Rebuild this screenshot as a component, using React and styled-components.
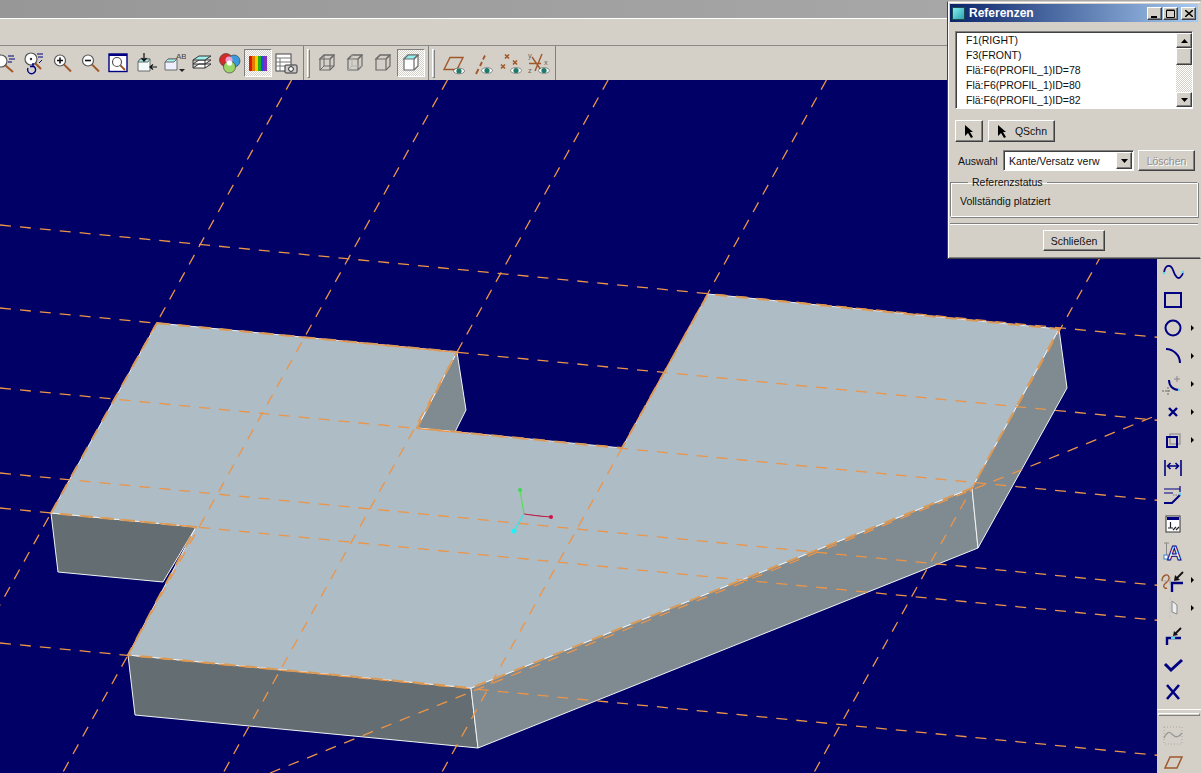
import React from 'react'
import styled, { createGlobalStyle, css } from 'styled-components'

const GlobalStyle = createGlobalStyle`
  html, body {
    margin: 0;
    width: 1201px;
    height: 773px;
    overflow: hidden;
    background: #d4d0c8;
    font-family: "Liberation Sans", Arial, sans-serif;
  }
`

const raised = css`
  background: #d4d0c8;
  border: 1px solid;
  border-color: #fff #404040 #404040 #fff;
  box-shadow: inset -1px -1px 0 #808080;
`

const sunken = css`
  border: 1px solid;
  border-color: #808080 #fff #fff #808080;
  box-shadow: inset 1px 1px 0 #404040;
`

const Shell = styled.div`
  position: relative;
  width: 1201px;
  height: 773px;
  display: flex;
  flex-direction: column;
  overflow: hidden;
`

const AppTitle = styled.div`
  height: 18px;
  background: linear-gradient(90deg, #979797, #ababab);
`

const MenuBand = styled.div`
  height: 26px;
  background: #d4d0c8;
  border-top: 1px solid #fff;
`

const ToolBar = styled.div`
  height: 34px;
  display: flex;
  background: #d4d0c8;
  border-top: 1px solid #8a8a86;
`

const ToolGroup = styled.div`
  display: flex;
  align-items: center;
  height: 34px;
  padding-right: ${p => p.$pad || 0}px;
  margin-left: ${p => p.$shift || 0}px;
  border-right: 1px solid #808080;
`

const Grip = styled.div`
  width: 1px;
  height: 27px;
  margin: 0 ${p => p.$after}px 0 3px;
  border: 1px solid;
  border-color: #fff #808080 #808080 #fff;
`

const ToolButton = styled.div`
  width: 28px;
  height: 28px;
  flex: none;
  display: flex;
  align-items: center;
  justify-content: center;
  box-sizing: border-box;
  ${p => p.$pressed && css`
    border: 1px solid;
    border-color: #808080 #fff #fff #808080;
    background: repeating-conic-gradient(#fff 0 25%, #d4d0c8 0 50%) 0 0 / 2px 2px;
  `}
`

const Main = styled.div`
  flex: 1;
  display: flex;
  min-height: 0;
`

const Scene = styled.svg`
  display: block;
  width: 1157px;
  height: 693px;
  flex: none;
  background: #000066;
`

const SideBar = styled.div`
  flex: 1;
  display: flex;
  flex-direction: column;
  padding-top: 178px;
  overflow: hidden;
  background: #d4d0c8;
`

const SideButton = styled.div`
  height: ${p => p.$height}px;
  flex: none;
  display: flex;
  align-items: center;
  padding-left: 4px;
`

const FlyoutMark = styled.span`
  width: 0;
  height: 0;
  margin-left: 6px;
  border-left: 3px solid #000;
  border-top: 3px solid transparent;
  border-bottom: 3px solid transparent;
`

const SideDivider = styled.div`
  flex: none;
  height: 13px;
  margin-top: 3px;
  border-top: 1px solid #fff;
  box-sizing: border-box;
  &::after {
    content: '';
    display: block;
    height: 1px;
    margin: 3px 1px 0;
    border: 1px solid;
    border-color: #fff #808080 #808080 #fff;
  }
`

const Dialog = styled.div`
  position: absolute;
  left: 947px;
  top: 1px;
  width: 254px;
  height: 258px;
  box-sizing: border-box;
  padding: 2px;
  background: #d4d0c8;
  border: 1px solid;
  border-color: #d4d0c8 #d4d0c8 #404040 #404040;
  box-shadow: inset 1px 1px 0 #fff, inset 0 -1px 0 #808080;
  font-size: 10.5px;
  color: #111;
`

const DialogTitle = styled.div`
  height: 18px;
  display: flex;
  align-items: center;
  padding: 0 2px;
  background: linear-gradient(90deg, #0a246a, #a6caf0);
  color: #fff;
  font-weight: bold;
  font-size: 12px;
`

const TitleIcon = styled.span`
  width: 11px;
  height: 11px;
  margin-right: 4px;
  background: linear-gradient(135deg, #7ff0ee, #30a0b0);
  border: 1px solid #1c4a50;
`

const CaptionButtons = styled.div`
  margin-left: auto;
  display: flex;
`

const CaptionButton = styled.span`
  ${raised}
  box-sizing: border-box;
  width: 15px;
  height: 13px;
  margin-left: ${p => p.$gap}px;
  display: flex;
  align-items: center;
  justify-content: center;
`

const RefList = styled.div`
  ${sunken}
  display: flex;
  width: 236px;
  height: 76px;
  margin: 9px 0 0 5px;
  background: #fff;
`

const RefRows = styled.ul`
  flex: 1;
  list-style: none;
  margin: 0;
  padding: 1px 0 0 10px;
`

const RefRow = styled.li`
  height: 15px;
  line-height: 15px;
`

const ScrollTrack = styled.div`
  width: 16px;
  display: flex;
  flex-direction: column;
  margin: 1px 0;
  background: repeating-conic-gradient(#fff 0 25%, #d4d0c8 0 50%) 0 0 / 2px 2px;
`

const ScrollButton = styled.div`
  ${raised}
  box-sizing: border-box;
  height: ${p => p.$tall || 15}px;
  flex: none;
  margin-top: ${p => (p.$end ? 'auto' : 0)};
  display: flex;
  align-items: center;
  justify-content: center;
`

const ActionRow = styled.div`
  display: flex;
  gap: 5px;
  margin: 11px 0 0 5px;
`

const Button = styled.div`
  ${raised}
  box-sizing: border-box;
  width: ${p => p.$width}px;
  height: ${p => p.$height || 21}px;
  display: flex;
  gap: 7px;
  align-items: center;
  justify-content: center;
  color: ${p => (p.$disabled ? '#8f8f8f' : '#111')};
  ${p => p.$disabled && 'text-shadow: 1px 1px 0 #fff;'}
`

const ChoiceRow = styled.div`
  display: flex;
  align-items: center;
  margin: 8px 0 0 8px;
`

const ChoiceLabel = styled.span`
  width: 45px;
`

const Choice = styled.div`
  ${sunken}
  box-sizing: border-box;
  width: 131px;
  height: 21px;
  margin-right: 4px;
  padding-left: 5px;
  display: flex;
  align-items: center;
  background: #fff;
`

const ChoiceArrow = styled(ScrollButton)`
  width: 16px;
  height: 17px;
  margin-left: auto;
  margin-right: 1px;
  margin-top: 0;
`

const StatusBox = styled.fieldset`
  box-sizing: border-box;
  height: 40px;
  width: 248px;
  margin: 6px 0 0;
  padding: 0 0 0 9px;
  border: 1px solid;
  border-color: #808080 #fff #fff #808080;
  box-shadow: 1px 1px 0 #808080, inset 1px 1px 0 #fff;
  line-height: 14px;
`

const StatusLegend = styled.legend`
  margin-left: 8px;
  padding: 0 4px;
  line-height: 10px;
`

const StatusText = styled.div`
  margin-top: 7px;
`

const Rule = styled.div`
  height: 0;
  margin: 6px 0 0;
  border-top: 1px solid #808080;
  border-bottom: 1px solid #fff;
`

const FooterRow = styled.div`
  display: flex;
  justify-content: center;
  margin-top: 5px;
`

const Icon = ({ children, size = 24 }) => (
  <svg width={size} height={size} viewBox="0 0 24 24" fill="none">
    {children}
  </svg>
)

const NAVY = '#000080'
const BROWN = '#a0582a'
const GREY = '#6b6b6b'

const Lens = ({ cx = 10, cy = 9.500, r = 5.500, hx = 21, hy = 20.500 }) => (
  <>
    <line x1={cx + r * 0.7} y1={cy + r * 0.7} x2={hx} y2={hy} stroke={BROWN} strokeWidth="2" />
    <circle cx={cx} cy={cy} r={r} fill="#fff" stroke="#555" strokeWidth="1.200" />
  </>
)

const Eye = ({ x = 16, y = 20 }) => (
  <>
    <ellipse cx={x} cy={y} rx="5.500" ry="2.800" fill="#fff" stroke="#333" strokeWidth=".5" />
    <circle cx={x} cy={y} r="2.600" fill="#1c7a68" />
  </>
)

const Cube = ({ fill = 'none', top = 'none', x = 5, y = 8, dash }) => (
  <>
    <path d={`M${x} ${y}l4 -4h10v11l-4 4h-10z`} fill={fill} stroke={GREY} strokeWidth="1.200" />
    <path d={`M${x} ${y}l4 -4h10l-4 4z`} fill={top} stroke={GREY} strokeWidth="1.200" />
    <path d={`M${x + 10} ${y}v11M${x + 10} ${y}l4 -4`} stroke={GREY} strokeWidth="1.200" />
    {dash && <path d={`M${x + 4} ${y - 4}v11h10M${x + 4} ${y + 7}l-4 4`} stroke={dash} strokeWidth="1" />}
  </>
)

const topIcons = [
  <Icon key="spec">
    <Lens cx={7} cy={10} r={6} hx={19} hy={21} />
    <path d="M14 5h6M15 8h6M14 11h4" stroke={NAVY} strokeWidth="1" />
  </Icon>,
  <Icon key="repaint">
    <Lens cx={9} cy={8} r={6} hx={19} hy={18} />
    <circle cx="9" cy="8" r="1.200" fill="#333" />
    <path d="M15 3h6M16 6h5M20 9l-3 3" stroke={NAVY} strokeWidth="1" />
    <path d="M6 17a4 4 0 1 0 5 -2M11 12v3.500h-3" stroke={NAVY} strokeWidth="1.400" />
  </Icon>,
  <Icon key="in">
    <Lens />
    <path d="M7 9.500h6M10 6.500v6" stroke="#111" strokeWidth="1.600" />
  </Icon>,
  <Icon key="out">
    <Lens />
    <path d="M7 9.500h6" stroke="#111" strokeWidth="1.600" />
  </Icon>,
  <Icon key="fit">
    <rect x="3" y="3" width="18" height="17.500" fill="#fff" stroke={NAVY} strokeWidth="1.400" />
    <rect x="3" y="3" width="18" height="2" fill={NAVY} />
    <Lens cx={11} cy={11} r={4.500} hx={19} hy={19} />
  </Icon>,
  <Icon key="orient">
    <path d="M4 11l2 -3h10v12H4z" fill="#f4fbfb" stroke={GREY} />
    <path d="M4 11l2 -3h10l-2 3z" fill="#9ff0ee" stroke={GREY} />
    <path d="M10 2v7M7.500 7l2.500 3 2.500 -3M23 16h-7M19 13.500l-3 2.500 3 2.500" stroke="#111" strokeWidth="1.200" />
  </Icon>,
  <Icon key="views">
    <path d="M3 11l3 -3h9v11H3z" fill="#eef" stroke={GREY} />
    <path d="M3 11l3 -3h9l-3 3z" fill="#9ff0ee" stroke={GREY} />
    <text x="14" y="8" fontSize="8" fill="#444" fontFamily="Liberation Sans">AB</text>
    <path d="M17 18h6l-3 3z" fill="#222" />
  </Icon>,
  <Icon key="layers">
    <path d="M3 17l6 -4h12l-6 4zM3 13l6 -4h12l-6 4z" fill="#fff" stroke="#333" />
    <path d="M3 9l6 -4h12l-6 4z" fill="#9ff0ee" stroke="#333" />
    <path d="M3 9v8M15 9v8" stroke="#333" />
  </Icon>,
  <Icon key="colors">
    <circle cx="8" cy="9" r="6.500" fill="#d42a2a" stroke="#333" strokeWidth=".6" />
    <circle cx="16" cy="10" r="6" fill="#3a9bdc" stroke="#333" strokeWidth=".6" />
    <circle cx="11.500" cy="16" r="6" fill="#9ad668" stroke="#333" strokeWidth=".6" />
    <circle cx="11" cy="9" r="3.500" fill="#f0a0d0" />
    <circle cx="11.500" cy="12" r="2.600" fill="#fff" />
  </Icon>,
  <Icon key="spectrum">
    <rect x="3" y="5" width="3" height="15" fill="#d81c00" />
    <rect x="6" y="5" width="3" height="15" fill="#e87a00" />
    <rect x="9" y="5" width="3" height="15" fill="#f4d000" />
    <rect x="12" y="5" width="3" height="15" fill="#22b020" />
    <rect x="15" y="5" width="3" height="15" fill="#2050e0" />
    <rect x="18" y="5" width="3" height="15" fill="#8030c0" />
  </Icon>,
  <Icon key="saved">
    <rect x="2" y="3" width="15" height="17" fill="#fff" stroke="#444" />
    <path d="M2 7h15M2 11h15M2 15h15M6 7v13" stroke="#777" />
    <rect x="11" y="14" width="12" height="8" rx="1" fill="#ccc" stroke="#333" />
    <circle cx="17" cy="18" r="2.400" fill="#fff" stroke="#222" />
  </Icon>,
]

const displayIcons = [
  <Icon key="wire"><Cube dash={GREY} /></Icon>,
  <Icon key="hidden"><Cube dash="#b0b0ac" /></Icon>,
  <Icon key="nohidden"><Cube /></Icon>,
  <Icon key="shaded"><Cube fill="#fff" top="#8ff0f0" /></Icon>,
]

const datumIcons = [
  <Icon key="planes">
    <path d="M1 18.500l6 -12h13l-6 12z" stroke={BROWN} strokeWidth="1.400" />
    <Eye />
  </Icon>,
  <Icon key="axes">
    <path d="M14 4.500l-2 4M11 11l-2 4M7.500 18l-2.500 5" stroke={BROWN} strokeWidth="1.800" />
    <Eye x={16} y={19.500} />
  </Icon>,
  <Icon key="points">
    <path d="M6 3.500l4 4M10 3.500l-4 4M14 9.500l4 4M18 9.500l-4 4M2 13.500l4 4M6 13.500l-4 4" stroke={BROWN} strokeWidth="1.600" />
    <Eye x={17} y={19.500} />
  </Icon>,
  <Icon key="csys">
    <path d="M15 3l-7 17M2 12.500h12M5 6l9 13" stroke={BROWN} strokeWidth="1.400" />
    <text x="1" y="7" fontSize="7.500" fill="#666" fontFamily="Liberation Sans">y</text>
    <text x="1" y="22" fontSize="7.500" fill="#666" fontFamily="Liberation Sans">z</text>
    <text x="17" y="14" fontSize="7.500" fill="#666" fontFamily="Liberation Sans">x</text>
    <Eye x={17} y={19.500} />
  </Icon>,
]

const CYAN = '#59d7f0'

const sideIcons = [
  { key: 'spline', icon: <><path d="M3 13c1 -9 7 -9 9 -3s5 10 7.500 7 2.500 -3 2.500 -5" stroke={NAVY} strokeWidth="1.800" /><circle cx="3" cy="13" r="1.300" fill={CYAN} /><circle cx="22" cy="12" r="1.300" fill={CYAN} /></> },
  { key: 'rect', icon: <rect x="4" y="5" width="16" height="14" stroke={NAVY} strokeWidth="2" /> },
  { key: 'circle', more: true, icon: <circle cx="12" cy="12" r="7.500" stroke={NAVY} strokeWidth="2" /> },
  { key: 'arc', more: true, icon: <path d="M5 5c7 0 14 6 14 14" stroke={NAVY} strokeWidth="2" /> },
  {
    key: 'fillet',
    more: true,
    icon: (
      <>
        <path d="M1 19h9M7 15v9" stroke="#888" strokeWidth="1.400" strokeDasharray="2 1" />
        <path d="M16 4v6M13 7h6" stroke="#888" />
        <path d="M8 8c0 6 4 10 10 10" stroke={NAVY} strokeWidth="2" />
        <circle cx="18" cy="18" r="1.300" fill={CYAN} />
      </>
    ),
  },
  { key: 'point', more: true, icon: <path d="M8 8l8 8M16 8l-8 8" stroke={NAVY} strokeWidth="2.400" /> },
  {
    key: 'offset',
    more: true,
    icon: (
      <>
        <rect x="9" y="6" width="10" height="10" stroke="#999" strokeWidth="1.400" />
        <rect x="6" y="9" width="10" height="10" stroke={NAVY} strokeWidth="2" />
      </>
    ),
  },
  { key: 'dim', icon: <path d="M4 4v16M20 4v16M7 10h10M9.500 7L6.500 10l3 3M14.500 7l3 3 -3 3" stroke={NAVY} strokeWidth="1.600" /> },
  {
    key: 'refdim',
    icon: (
      <>
        <path d="M3 5h16M19 2v6M3 9h9" stroke={NAVY} strokeWidth="1.200" />
        <path d="M12 11h6" stroke="#999" strokeDasharray="1.500 1" strokeWidth="1.400" />
        <path d="M3 19h8l8 -8" stroke={NAVY} strokeWidth="2" />
        <circle cx="19" cy="10" r="1.300" fill={CYAN} />
      </>
    ),
  },
  {
    key: 'note',
    icon: (
      <>
        <rect x="5" y="4" width="14" height="16" fill="#fff" stroke="#333" />
        <rect x="6" y="5" width="12" height="3" fill={NAVY} />
        <path d="M7 16h5M9.500 10v6M12 18l3 -3M15 18l3 -3" stroke="#222" strokeWidth="1.200" />
      </>
    ),
  },
  {
    key: 'text',
    icon: (
      <>
        <path d="M3 3h5M5.500 3v13" stroke="#888" />
        <rect x="3" y="15" width="4" height="4" fill="#fff" stroke="#3a7fd0" />
        <text x="6" y="20" fontSize="20" fontWeight="bold" fill="#fff" stroke={NAVY} strokeWidth="1" fontFamily="Liberation Sans">A</text>
      </>
    ),
  },
  {
    key: 'constraint',
    more: true,
    icon: (
      <>
        <path d="M1 13c0 -6 6 -8 7 -4s-4 6 -5 8 1 4 3 3" stroke={BROWN} strokeWidth="1.400" />
        <path d="M11 24v-9h11" stroke={NAVY} strokeWidth="2.400" />
        <path d="M1 13h9M9 9v8" stroke="#999" strokeDasharray="1.500 1" />
        <path d="M22 4l-7 7" stroke="#111" strokeWidth="1.800" />
        <path d="M13 13l1 -6 5 5z" fill="#111" />
      </>
    ),
  },
  {
    key: 'palette',
    more: true,
    icon: (
      <>
        <path d="M9 1v22" stroke="#c8c8c8" strokeWidth="1.500" strokeDasharray="3 1.500" />
        <path d="M11 5l5 4v9l-5 -2z" fill="#eee" stroke="#888" />
      </>
    ),
  },
  {
    key: 'modify',
    icon: (
      <>
        <path d="M6 21v-7h14" stroke={NAVY} strokeWidth="2.400" />
        <path d="M10 14h4" stroke={CYAN} strokeWidth="2.400" />
        <path d="M20 4l-6 6" stroke="#111" strokeWidth="1.800" />
        <path d="M12 12l1 -5 4 4z" fill="#111" />
      </>
    ),
  },
  { key: 'ok', icon: <path d="M4 12l6 6 11 -10" stroke={NAVY} strokeWidth="3" /> },
  { key: 'cancel', icon: <path d="M6 5l12 14M18 5l-12 14" stroke={NAVY} strokeWidth="2.600" /> },
]

const sideLower = [
  {
    key: 'wave',
    icon: (
      <>
        <rect x="3" y="4" width="18" height="17" stroke="#a8a8a4" strokeDasharray="1 2" />
        <path d="M3 15c4 -8 6 -6 9 -3s6 2 9 -2" stroke="#999" strokeWidth="1.400" />
      </>
    ),
  },
  { key: 'sketchplane', icon: <path d="M4 19l5 -11h12l-5 11z" stroke={BROWN} strokeWidth="1.500" /> },
]

const SLOPE = 0.097
const STEEP = 1.8
const shallow = [225, 308, 388, 473, 508, 643]
const steep = [
  [51, 513],
  [128, 655],
  [457, 352],
  [622, 448],
  [972, 488],
]

const gridLines = [
  ...shallow.map(y => [0, y, 1160, y + SLOPE * 1160]),
  ...steep.map(([x, y]) => [x + (y - 80) / STEEP, 80, x + (y - 773) / STEEP, 773]),
  [270, 773, 1160, 414],
]

const TOP_FACE = '157,323 457,352 417,428 622,448 708,294 1059,329 972,488 471,688 128,655 196,527 51,513'

const sideFaces = [
  { points: '51,513 196,527 163,582 58,572', fill: '#646d72' },
  { points: '128,655 471,688 478,748 135,715', fill: '#646d72' },
  { points: '457,352 466,410 455,432 417,428', fill: '#7f8b90' },
  { points: '471,688 972,488 978,548 478,748', fill: '#7f8b90' },
  { points: '972,488 1059,329 1067,388 978,548', fill: '#7f8b90' },
]

const Model = () => (
  <Scene viewBox="0 80 1157 693">
    {sideFaces.map(face => (
      <polygon key={face.points} points={face.points} fill={face.fill} stroke="#f2f4f5" strokeWidth="1" />
    ))}
    <polygon points={TOP_FACE} fill="#aebcc5" stroke="#eef1f2" strokeWidth="1" />
    <g stroke="#ec9448" strokeWidth="1.300" strokeDasharray="11 9">
      {gridLines.map(([x1, y1, x2, y2]) => (
        <line key={`${x1}-${y1}`} x1={x1} y1={y1} x2={x2} y2={y2} />
      ))}
    </g>
    <polygon points={TOP_FACE} fill="none" stroke="#d99a58" strokeWidth="2" strokeDasharray="12 9" />
    <path d="M524 514L520 490" stroke="#55e055" strokeWidth="1.200" />
    <circle cx="520" cy="490" r="2" fill="#40d850" />
    <path d="M524 514L539 516L551 517" stroke="#c81848" strokeWidth="1.200" />
    <circle cx="551" cy="517" r="2" fill="#d01048" />
    <path d="M524 514L514 531" stroke="#30e8f0" strokeWidth="1.200" />
    <circle cx="514" cy="531" r="2.500" fill="#20f0f8" />
  </Scene>
)

const Pointer = () => (
  <svg width="12" height="14" viewBox="0 0 12 14">
    <path d="M2 1l8 7h-3l3 5-2 1-3-5-3 3z" fill="#000" />
  </svg>
)

const Triangle = ({ up }) => (
  <svg width="7" height="4" viewBox="0 0 7 4">
    <path d={up ? 'M3.500 0L7 4H0z' : 'M0 0h7L3.500 4z'} fill="#000" />
  </svg>
)

const refs = ['F1(RIGHT)', 'F3(FRONT)', 'Flä:F6(PROFIL_1)ID=78', 'Flä:F6(PROFIL_1)ID=80', 'Flä:F6(PROFIL_1)ID=82']

const ReferencesDialog = () => (
  <Dialog>
    <DialogTitle>
      <TitleIcon />
      Referenzen
      <CaptionButtons>
        <CaptionButton $gap={0}>
          <svg width="9" height="9"><rect x="1" y="7" width="6" height="2" fill="#000" /></svg>
        </CaptionButton>
        <CaptionButton $gap={1}>
          <svg width="9" height="9"><path d="M.500 1.500h8v7h-8zM.500 1h8" fill="none" stroke="#000" /></svg>
        </CaptionButton>
        <CaptionButton $gap={3}>
          <svg width="8" height="7"><path d="M0 0l8 7M8 0l-8 7" stroke="#000" strokeWidth="1.500" /></svg>
        </CaptionButton>
      </CaptionButtons>
    </DialogTitle>
    <RefList>
      <RefRows>
        {refs.map(ref => (
          <RefRow key={ref}>{ref}</RefRow>
        ))}
      </RefRows>
      <ScrollTrack>
        <ScrollButton><Triangle up /></ScrollButton>
        <ScrollButton $tall={17} />
        <ScrollButton $end><Triangle /></ScrollButton>
      </ScrollTrack>
    </RefList>
    <ActionRow>
      <Button $width={28} $height={22}><Pointer /></Button>
      <Button $width={67} $height={22}><Pointer />QSchn</Button>
    </ActionRow>
    <ChoiceRow>
      <ChoiceLabel>Auswahl</ChoiceLabel>
      <Choice>
        Kante/Versatz verw
        <ChoiceArrow><Triangle /></ChoiceArrow>
      </Choice>
      <Button $width={57} $disabled>Löschen</Button>
    </ChoiceRow>
    <StatusBox>
      <StatusLegend>Referenzstatus</StatusLegend>
      <StatusText>Vollständig platziert</StatusText>
    </StatusBox>
    <Rule />
    <FooterRow>
      <Button $width={62}>Schließen</Button>
    </FooterRow>
  </Dialog>
)

const Side = ({ items, height }) =>
  items.map(item => (
    <SideButton key={item.key} $height={height}>
      <Icon>{item.icon}</Icon>
      {item.more && <FlyoutMark />}
    </SideButton>
  ))

const App = () => (
  <Shell>
    <GlobalStyle />
    <AppTitle />
    <MenuBand />
    <ToolBar>
      <ToolGroup $shift={-8} $pad={3}>
        {topIcons.map((icon, i) => (
          <ToolButton key={icon.key} $pressed={i === 9}>{icon}</ToolButton>
        ))}
      </ToolGroup>
      <ToolGroup $pad={3}>
        <Grip $after={3} />
        {displayIcons.map((icon, i) => (
          <ToolButton key={icon.key} $pressed={i === 3}>{icon}</ToolButton>
        ))}
      </ToolGroup>
      <ToolGroup $pad={2}>
        <Grip $after={6} />
        {datumIcons.map(icon => (
          <ToolButton key={icon.key}>{icon}</ToolButton>
        ))}
      </ToolGroup>
    </ToolBar>
    <Main>
      <Model />
      <SideBar>
        <Side items={sideIcons} height={28} />
        <SideDivider />
        <Side items={sideLower} height={26} />
      </SideBar>
    </Main>
    <ReferencesDialog />
  </Shell>
)

export default App
